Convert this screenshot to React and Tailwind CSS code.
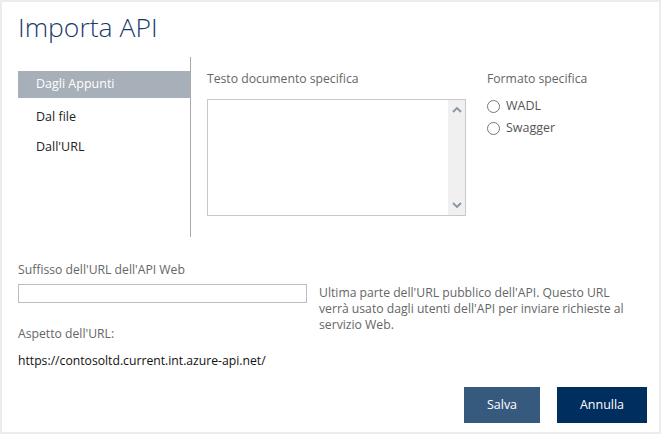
import React from "react";

function Radio({ label }) {
  return (
    <label className="flex items-center gap-[6px] h-[22px] text-[12.5px] text-[#555]">
      <span className="w-[13px] h-[13px] rounded-full border border-[#777] bg-white" />
      {label}
    </label>
  );
}

function ScrollArrow({ up }) {
  return (
    <svg width="10" height="7" viewBox="0 0 10 7">
      <path
        d={up ? "M1 6 L5 2 L9 6" : "M1 1 L5 5 L9 1"}
        fill="none"
        stroke="#8a93a3"
        strokeWidth="1.8"
      />
    </svg>
  );
}

export default function App() {
  const navItems = ["Dagli Appunti", "Dal file", "Dall'URL"];

  return (
    <div
      className="w-[661px] h-[434px] bg-white border-2 border-[#ececec] text-[#222] overflow-hidden"
      style={{ fontFamily: "'Open Sans', 'Noto Sans', sans-serif" }}
    >
      <div className="pl-[16px] pr-[12px]">
        <h1 className="h-[55px] pt-[8px] text-[26.5px] font-light leading-[34px] text-[#1c3a6b]">Importa API</h1>

        <div className="flex">
          <nav className="w-[173px] h-[180px] border-r border-[#a9a9a9] pt-[14px]">
            {navItems.map((item, i) => (
              <div
                key={item}
                className={
                  i === 0
                    ? "h-[27px] pl-[18px] flex items-center text-[12.5px] text-white bg-[#a7afb9]"
                    : i === 1
                    ? "mt-[4px] h-[30px] pl-[18px] flex items-center text-[12.5px] text-[#222]"
                    : "h-[30px] pl-[18px] flex items-center text-[12.5px] text-[#222]"
                }
              >
                {item}
              </div>
            ))}
          </nav>

          <section className="pl-[16px] pt-[13px]">
            <p className="text-[12.2px] leading-[17px] text-[#666]">Testo documento specifica</p>
            <div className="mt-[12px] w-[259px] h-[117px] border border-[#c8c8c8] flex justify-end">
              <div className="w-[17px] h-full bg-[#f0f0f0] flex flex-col items-center justify-between py-[6px]">
                <ScrollArrow up />
                <ScrollArrow />
              </div>
            </div>
          </section>

          <section className="pl-[21px] pt-[13px]">
            <p className="text-[12.2px] leading-[17px] text-[#666]">Formato specifica</p>
            <div className="mt-[8px]">
              <Radio label="WADL" />
              <Radio label="Swagger" />
            </div>
          </section>
        </div>

        <div className="mt-[24px]">
          <p className="text-[12.2px] leading-[17px] text-[#666]">Suffisso dell'URL dell'API Web</p>
          <div className="mt-[6px] flex gap-[12px]">
            <div className="w-[289px] h-[19px] border border-[#bdbdbd]" />
            <p className="mt-[1px] w-[312px] text-[12.2px] leading-[16px] text-[#666]">
              Ultima parte dell'URL pubblico dell'API. Questo URL verrà usato dagli utenti dell'API per inviare richieste al servizio Web.
            </p>
          </div>
          <p className="mt-[-8px] text-[12.2px] leading-[17px] text-[#666]">Aspetto dell'URL:</p>
          <p className="mt-[10px] text-[12.2px] leading-[17px] text-[#111]">https://contosoltd.current.int.azure-api.net/</p>
        </div>

        <div className="mt-[18px] flex justify-end gap-[17px]">
          <button className="w-[76px] h-[36px] bg-[#365a7e] text-white text-[12.5px]">Salva</button>
          <button className="w-[90px] h-[36px] bg-[#002f5f] text-white text-[12.5px]">Annulla</button>
        </div>
      </div>
    </div>
  );
}
